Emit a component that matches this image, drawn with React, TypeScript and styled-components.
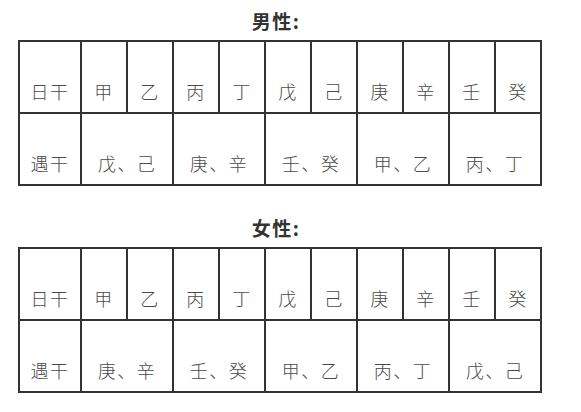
import React from "react";
import styled, { createGlobalStyle } from "styled-components";

const Global = createGlobalStyle`
  html, body { margin: 0; padding: 0; background: #fff; }
  body { font-family: "Noto Sans CJK SC", "Noto Sans", sans-serif; color: #3a3a3a; }
`;

const Page = styled.div`
  padding-left: 18px;
  width: 524px;
`;

const Section = styled.section`
  height: 207px;
  display: flex;
  flex-direction: column;
`;

const Title = styled.h3`
  margin: 0;
  height: 40px;
  display: flex;
  align-items: center;
  justify-content: center;
  padding-right: 8px;
  padding-top: 1px;
  box-sizing: border-box;
  font-size: 19px;
  font-weight: 700;
  color: #333;
  letter-spacing: 1.5px;
`;

const Grid = styled.div`
  display: grid;
  grid-template-columns: 60px repeat(10, 44px);
  grid-auto-rows: 70px;
  gap: 2px;
  padding: 2px;
  background: #333;
  width: max-content;
`;

const Cell = styled.div<{ $span?: number }>`
  background: #fff;
  grid-column: span ${(p) => p.$span ?? 1};
  display: flex;
  align-items: flex-end;
  justify-content: center;
  padding-bottom: 9px;
  box-sizing: border-box;
  font-size: 18px;
  font-weight: 300;
  line-height: 24px;
  color: #4a4a4a;
  letter-spacing: 1.5px;
`;

const stems = ["甲", "乙", "丙", "丁", "戊", "己", "庚", "辛", "壬", "癸"];

type Data = { title: string; pairs: string[] };

const data: Data[] = [
  { title: "男性:", pairs: ["戊、己", "庚、辛", "壬、癸", "甲、乙", "丙、丁"] },
  { title: "女性:", pairs: ["庚、辛", "壬、癸", "甲、乙", "丙、丁", "戊、己"] },
];

export default function App() {
  return (
    <Page>
      <Global />
      {data.map((d) => (
        <Section key={d.title}>
          <Title>{d.title}</Title>
          <Grid>
            <Cell>日干</Cell>
            {stems.map((s) => (
              <Cell key={s}>{s}</Cell>
            ))}
            <Cell>遇干</Cell>
            {d.pairs.map((p) => (
              <Cell key={p} $span={2}>
                {p}
              </Cell>
            ))}
          </Grid>
        </Section>
      ))}
    </Page>
  );
}
